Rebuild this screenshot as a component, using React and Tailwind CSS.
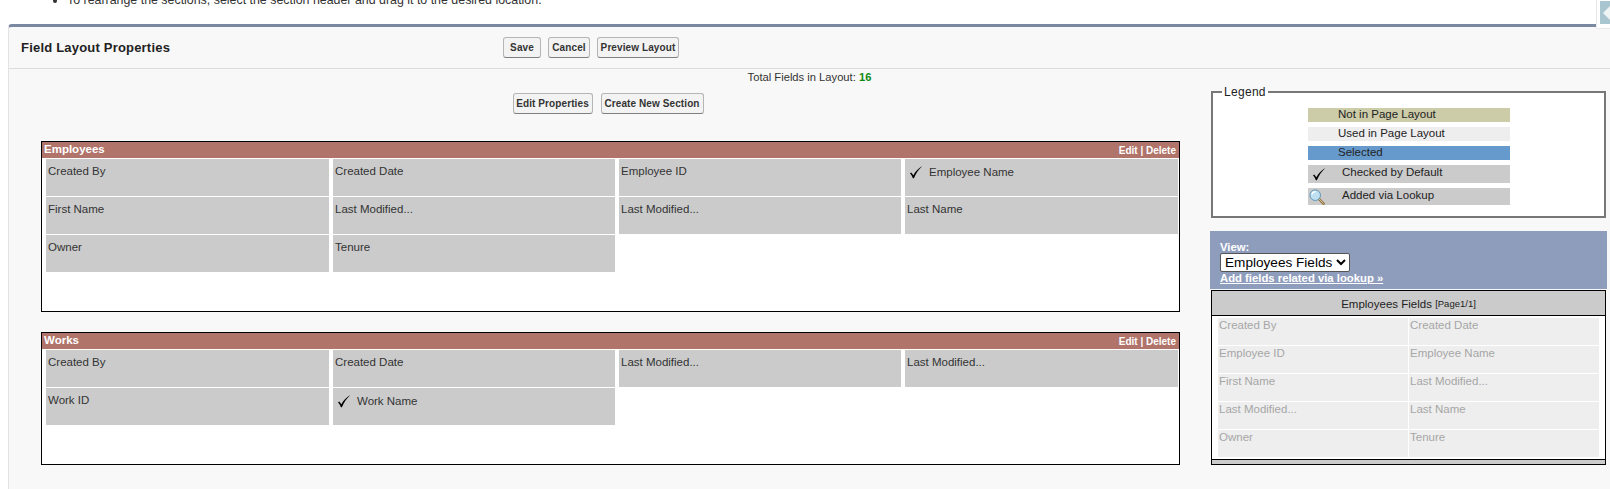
import { useState } from 'react'

const employeeFields = [
  { name: 'Created By' },
  { name: 'Created Date' },
  { name: 'Employee ID' },
  { name: 'Employee Name', checked: true },
  { name: 'First Name' },
  { name: 'Last Modified...' },
  { name: 'Last Modified...' },
  { name: 'Last Name' },
  { name: 'Owner' },
  { name: 'Tenure' },
]

const workFields = [
  { name: 'Created By' },
  { name: 'Created Date' },
  { name: 'Last Modified...' },
  { name: 'Last Modified...' },
  { name: 'Work ID' },
  { name: 'Work Name', checked: true },
]

const paletteFields = [
  'Created By',
  'Created Date',
  'Employee ID',
  'Employee Name',
  'First Name',
  'Last Modified...',
  'Last Modified...',
  'Last Name',
  'Owner',
  'Tenure',
]

function CheckMark() {
  return (
    <svg width="14" height="14" viewBox="0 0 14 14" className="shrink-0">
      <path d="M1 8.2 L2.2 7.4 L4.4 10.2 C6.4 6.6 9 3.4 13.4 1 C9.6 4.4 7 8.4 4.9 13.2 L3.9 13.2 C3.2 11.2 2.2 9.6 1 8.2 Z" fill="#000" />
    </svg>
  )
}

function LookupIcon() {
  return (
    <svg width="16" height="16" viewBox="0 0 17 17" className="shrink-0">
      <path d="M10 10 L15.5 15.6" stroke="#8a6a3a" strokeWidth="2.6" strokeLinecap="round" />
      <path d="M10.6 10.4 L15.3 15.2" stroke="#f0d9a0" strokeWidth="1" strokeLinecap="round" />
      <circle cx="6.6" cy="6.6" r="5.6" fill="#bfe0f2" stroke="#5a8fb0" strokeWidth="1" />
      <path d="M3 6 C3.4 4 5 2.8 7 2.8" stroke="#fff" strokeWidth="1.2" fill="none" />
    </svg>
  )
}

function Btn({ children, className }) {
  return (
    <button className={`h-[21px] rounded-[3px] border border-[#b5b5b5] border-b-[#7f7f7f] bg-[#f3f3f3] text-[10px] font-bold tracking-[0.1px] text-[#333] ${className}`}>
      {children}
    </button>
  )
}

function Section({ title, fields, height, className }) {
  return (
    <div className={`border border-black bg-white ${height} ${className}`}>
      <div className="flex h-4 items-center justify-between bg-[#b0746a] pl-[2px] pr-[3px] text-white">
        <span className="text-[11.5px] font-bold">{title}</span>
        <span className="text-[10px] font-bold">Edit | Delete</span>
      </div>
      <div className="mt-px grid grid-cols-[283px_282px_282px_273px] gap-x-1 gap-y-px pl-1">
        {fields.map((f, i) => (
          <div key={i} className="h-[37px] bg-[#cbcbcb] pl-[2px] pt-[5px] text-[11.5px] leading-[14px] text-[#333]">
            {f.checked ? (
              <div className="flex items-start gap-[6px] pl-[2px] pt-[1px]">
                <CheckMark />
                <span>{f.name}</span>
              </div>
            ) : (
              f.name
            )}
          </div>
        ))}
      </div>
    </div>
  )
}

function LegendRow({ color, height, pad, children }) {
  return (
    <div className={`flex items-center text-[11.5px] leading-none text-[#222] ${color} ${height} ${pad}`}>
      {children}
    </div>
  )
}

export default function App() {
  const [view, setView] = useState('Employees Fields')

  return (
    <div className="relative h-[489px] overflow-hidden bg-white font-['Liberation_Sans',Arial,sans-serif]">
      <div className="h-6 overflow-hidden pl-[55px]">
        <ul className="-mt-[7px] list-disc pl-3 text-[12.4px] leading-[15px] text-[#333]">
          <li>To rearrange the sections, select the section header and drag it to the desired location.</li>
        </ul>
      </div>

      <div className="absolute right-0 top-0 z-10 h-[29px] w-[14px] rounded-bl-[2px] border-b border-l border-[#e8e8e8] bg-white pl-[3px] pt-px">
        <div className="flex h-[23px] items-center overflow-hidden bg-[#a9c5d0] pl-[3px]">
          <span className="h-0 w-0 border-y-[8px] border-r-[8px] border-y-transparent border-r-[#eef3f3]" />
        </div>
      </div>

      <div className="ml-2 h-[465px] rounded-tl-[4px] border-l border-t-[3px] border-[#e2e2e2] border-t-[#7b88a2] bg-[#f8f8f8]">
        <div className="flex h-[42px] items-center border-b border-[#dcdcdc]">
          <h1 className="ml-[12px] w-[482px] text-[13px] font-bold tracking-[0.2px] text-[#222]">Field Layout Properties</h1>
          <div className="flex gap-[7px]">
            <Btn className="w-[38px]">Save</Btn>
            <Btn className="w-[42px]">Cancel</Btn>
            <Btn className="w-[82px]">Preview Layout</Btn>
          </div>
        </div>

        <div className="mt-[2px] text-center text-[11.2px] leading-[13px] text-[#333]">
          Total Fields in Layout: <b className="text-[#108a10]">16</b>
        </div>

        <div className="flex">
          <div className="ml-[32px] w-[1139px]">
            <div className="mt-[9px] flex justify-center gap-2 pr-[5px]">
              <Btn className="w-[80px]">Edit Properties</Btn>
              <Btn className="w-[103px]">Create New Section</Btn>
            </div>
            <Section title="Employees" fields={employeeFields} height="h-[171px]" className="mt-[27px]" />
            <Section title="Works" fields={workFields} height="h-[133px]" className="mt-[20px]" />
          </div>

          <div className="ml-[30px] w-[397px]">
            <fieldset className="ml-px mt-px h-[133px] w-[395px] border-2 border-[#777] bg-white">
              <legend className="ml-[9px] px-[2px] text-[12px] leading-[14px] tracking-[0.3px] text-[#222]">Legend</legend>
              <div className="ml-[95px] mt-[9px] flex w-[202px] flex-col gap-[5px]">
                <LegendRow color="bg-[#cccca8]" height="h-[14px]" pad="pl-[30px]">Not in Page Layout</LegendRow>
                <LegendRow color="bg-[#eeeeee]" height="h-[14px]" pad="pl-[30px]">Used in Page Layout</LegendRow>
                <LegendRow color="bg-[#6699cc]" height="h-[14px]" pad="pl-[30px]">Selected</LegendRow>
                <LegendRow color="bg-[#cbcbcb]" height="h-[18px]" pad="pl-[4px] gap-4">
                  <CheckMark />
                  <span className="-mt-[2px]">Checked by Default</span>
                </LegendRow>
                <LegendRow color="bg-[#cbcbcb]" height="h-[17px]" pad="pl-[1px] gap-[17px]">
                  <LookupIcon />
                  <span className="-mt-[2px]">Added via Lookup</span>
                </LegendRow>
              </div>
            </fieldset>

            <div className="mt-[13px] h-[58px] bg-[#8f9dbd] pl-[10px] pt-[10px] text-[11.3px] font-bold leading-3 text-white">
              <div>View:</div>
              <select
                value={view}
                onChange={(e) => setView(e.target.value)}
                className="block h-[19px] w-[130px] rounded-[2px] border border-[#555] bg-white pl-0 text-[13.6px] font-normal leading-none text-black"
              >
                <option>Employees Fields</option>
                <option>Works Fields</option>
              </select>
              <a href="#" className="block underline">Add fields related via lookup »</a>
            </div>

            <div className="ml-px mt-px h-[175px] w-[395px] border border-black bg-white">
              <div className="flex h-[25px] items-center justify-center border-b border-black bg-[#cbcbcb] pt-[3px] text-[11.5px] text-[#222]">
                Employees Fields&nbsp;<span className="text-[9.5px]">[Page1/1]</span>
              </div>
              <div className="ml-[6px] mt-[2px] grid w-[381px] grid-cols-2 gap-px">
                {paletteFields.map((name, i) => (
                  <div key={i} className="h-[27px] bg-[#eeeeee] pl-px text-[11.5px] leading-[14px] text-[#a6a6a6]">
                    {name}
                  </div>
                ))}
              </div>
              <div className="mt-[2px] h-[5px] border-t border-black bg-[#cbcbcb]" />
            </div>
          </div>
        </div>
      </div>
    </div>
  )
}
